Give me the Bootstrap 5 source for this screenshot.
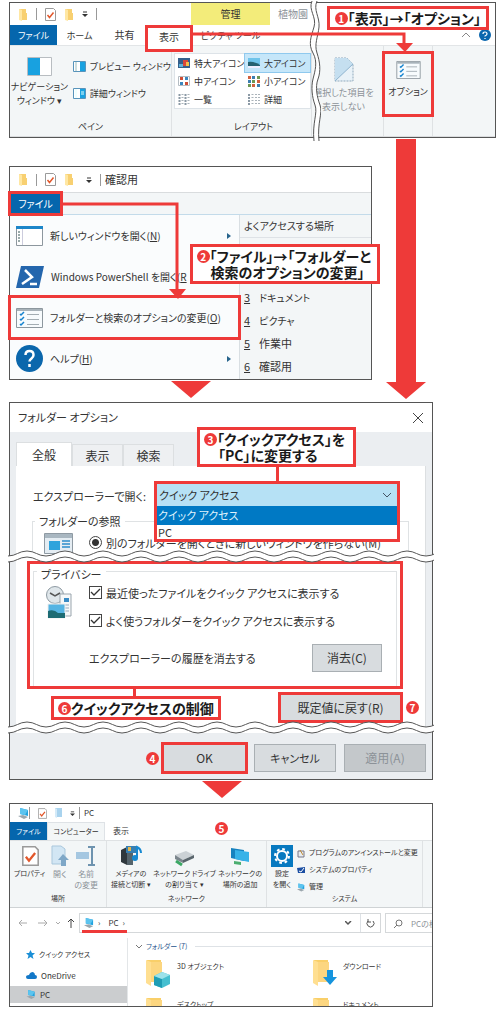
<!DOCTYPE html>
<html lang="ja">
<head>
<meta charset="utf-8">
<meta name="viewport" content="width=device-width, initial-scale=1">
<title>フォルダー オプション</title>
<link href="https://cdn.jsdelivr.net/npm/bootstrap@5.3.0/dist/css/bootstrap.min.css" rel="stylesheet">
<script src="https://cdn.jsdelivr.net/npm/bootstrap@5.3.0/dist/js/bootstrap.bundle.min.js"></script>
<style>
:root{--red:#ee3a39;--ribbon:#f3f6f7;--file:#0566ad;--ink:#333}
body{font-family:"Noto Sans CJK JP",sans-serif;font-feature-settings:"palt";color:var(--ink);background:#fff;line-height:1;font-size:10px}
main{padding:2px 4px 4px 9px}
svg{display:block;flex:none}
button,select,input{font:inherit;font-feature-settings:inherit;color:inherit}
button{border:0;background:none;padding:0;white-space:nowrap}
.pane{position:relative;border:1px solid #555;background:#fff;white-space:nowrap}
.pane-mid{width:calc(100% - 124px);margin-top:28px}
.pane-wide{width:calc(100% - 63px)}
.callout{position:absolute;z-index:5;border:3px solid var(--red);background:#fff;color:#1a1a1a;font-weight:700;font-size:14px;line-height:16px;white-space:nowrap}
.num{display:inline-flex;align-items:center;justify-content:center;width:13px;height:13px;border-radius:50%;background:var(--red);color:#fff;font-size:10px;font-weight:700;line-height:13px;vertical-align:1px;flex:none}
.boxed{outline:3px solid var(--red);outline-offset:-1px;position:relative;z-index:2}
.over{position:absolute;z-index:4;pointer-events:none}
.vr-line{width:1px;height:12px;background:#999}
.file-tab{background:var(--file);color:#fff}
.strip{background:var(--ribbon)}
.dim{color:#8c9298}
.t8{font-size:8px}
.t9{font-size:9px}
.t10{font-size:10px}
.t11{font-size:11px}
.t12{font-size:12px}
/* ribbon window */
.r-title{height:22px}
.r-tabs{height:20px}
.r-tabs .boxed{height:23px;margin-top:2px}
.ctx{background:#f3ec7a;width:79px}
.r-body{height:92px;border-top:1px solid #e2e5e7;border-bottom:1px solid #dadcde;font-size:9px}
.grp{display:flex;flex-direction:column;border-right:1px solid #dfe2e4;padding-top:7px;flex:none}
.grp-name{margin-top:auto;padding-bottom:5px;text-align:center}
.gallery{background:#fff;border:1px solid #dde3e8;display:grid;grid-template-columns:70px 1fr;grid-auto-rows:18px;margin-left:2px}
.gallery button{display:flex;align-items:center;gap:4px;padding-left:3px}
.gallery .on{background:#c5e6f9;outline:1px solid #8fc9ee}
/* file menu */
.m-title{height:25px}
.m-strip{height:23px;border-top:1px solid #d9dcde;border-bottom:1px solid #c3dbea}
.m-item{height:41px;display:flex;align-items:center;gap:7px;padding-left:6px;width:100%;text-align:left}
.m-left{width:229px;background:#fafcfd;flex:none}
.m-right{border-left:1px solid #d9dfe3;background:var(--ribbon)}
.m-right li{height:23px;display:flex;align-items:center;gap:9px;padding-left:4px}
/* dialog */
.dlg{font-size:11px;margin-top:22px}
.d-title{height:29px}
.d-back{background:#ebeef1;padding:10px 6px 0}
.d-tab{height:22px;width:51px;background:#eef0f2;border:1px solid #dcdfe1;border-bottom:0;margin-top:2px}
.d-tab.on{height:24px;width:56px;background:#fff;margin-top:0}
.d-page{background:#fff;border-right:1px solid #dcdfe1}
.open-row{position:relative;padding:22px 0 0 17px}
.combo{position:absolute;z-index:3;left:138px;right:25px;top:15px;border:3px solid var(--red);background:#fff}
.combo select{display:block;width:100%;height:22px;border:0;border-radius:0;background-color:#b6e1f5;padding:0 2px;appearance:none}
.combo li{height:19px;line-height:19px;padding-left:1px}
.combo li.sel{background:#0079c4;color:#dff1fc}
.combo li + li{height:14px;line-height:14px}
.frame{border:1px solid #dfe2e4}
.folder-set{margin:10px 16px 0}
.legend-text{background:#fff;padding:0 4px;line-height:14px;font-size:11px;float:none;width:auto;margin:-7px 0 0 2px}
.tear{position:relative;z-index:3;width:calc(100% + 4px);margin-left:-2px}
.form-check-input{width:13px;height:13px;margin:0;border:1px solid #444;background-size:13px;flex:none}
.form-check-input[type=checkbox]{border-radius:0}
.form-check-input:checked{background-color:#fff;border-color:#444}
.form-check-input:checked[type=checkbox]{background-image:url("data:image/svg+xml,%3csvg xmlns='http://www.w3.org/2000/svg' viewBox='0 0 13 13'%3e%3cpath d='M2 6l3 3 6-6' fill='none' stroke='%23333' stroke-width='1.3'/%3e%3c/svg%3e")}
.form-check-input:checked[type=radio]{background-image:radial-gradient(circle,#333 3px,#fff 4px)}
.btn-win{background:#d8dcdf;border:1px solid #a9afb3;height:28px}
/* explorer */
.exp{font-size:7px;margin-top:23px;overflow:hidden}
.e-title{height:18px}
.e-tabs{height:18px}
.e-body{height:68px;border-top:1px solid #dfe2e4;border-bottom:1px solid #cfd3d5}
.e-body .grp{padding-top:4px}
.e-btn{display:flex;flex-direction:column;align-items:center;line-height:11px}
.e-btn svg{margin-bottom:1px}
.addr{height:30px}
.addr-box{height:20px;border:1px solid #d5d8da}
.e-nav{width:118px;border-right:1px solid #e3e6e8;padding-top:6px;flex:none}
.e-nav a{display:flex;align-items:center;gap:4px;height:21px;padding-left:16px;color:inherit;text-decoration:none}
.e-nav a.on{background:#cbcdcf;height:17px}
.e-files{height:68px}
.tile{display:flex;gap:6px;height:38px}
.tile span{line-height:14px}
</style>
</head>
<body>
<svg width="0" height="0" class="position-absolute">
  <defs>
    <symbol id="folder" viewBox="0 0 10 13"><path d="M1 1h7v4h1v7H1z" fill="#f8d071"/><path d="M1 1l3 1v11l-3-1z" fill="#ffe7a3"/></symbol>
    <symbol id="doc" viewBox="0 0 11 13"><path d="M.5.5h8l2 2v10H.5z" fill="#fff" stroke="#9a9a9a"/><path d="M2.500 7l2 2.500 4-5" fill="none" stroke="#e2572b" stroke-width="1.500"/></symbol>
    <symbol id="drop" viewBox="0 0 6 6"><path d="M1 1h4" stroke="#333"/><path d="M0 3h6L3 6z" fill="#333"/></symbol>
    <symbol id="opt" viewBox="0 0 27 20"><path d="M.5.5h26v19H.5z" fill="#f7fbfd" stroke="#8d979e"/><path d="M1 1h25v2H1z" fill="#a8b3ba"/><path d="M4 6l1 1 3-3M4 11l1 1 3-3M4 16l1 1 3-3" fill="none" stroke="#1583cf" stroke-width="1.500"/><path d="M11 6.500h12M11 11.500h12M11 16.500h12" stroke="#a3adb3"/></symbol>
    <symbol id="pc" viewBox="0 0 11 11"><path d="M2 0l8 2v6L2 6z" fill="#22a3df"/><path d="M2 0l8 2-3 5-5-1z" fill="#5cc4ef"/><path d="M0 8l5-1 5 2-4 2z" fill="#9ba7ae"/></symbol>
    <symbol id="big-folder" viewBox="0 0 17 28"><path d="M1 1h14v21H1z" fill="#f9cf69"/><path d="M0 1l5 2v24l-5-3z" fill="#ffdf91"/><path d="M5 3h11v20H5z" fill="#fcd680"/></symbol>
    <pattern id="wave" width="38" height="14" patternUnits="userSpaceOnUse">
      <path d="M0 6C8 6 11 1 19 1S30 6 38 6V12C30 12 27 7 19 7S8 12 0 12z" fill="#fff"/>
      <path d="M0 6C8 6 11 1 19 1S30 6 38 6M0 12C8 12 11 7 19 7S30 12 38 12" fill="none" stroke="#555"/>
    </pattern>
  </defs>
</svg>
<main>

<section class="pane">
  <div class="r-title d-flex align-items-center">
    <div class="d-flex align-items-center ps-1" style="width:181px">
      <svg class="ms-1 me-1" width="10" height="13"><use href="#folder"/></svg>
      <span class="vr-line mx-1"></span>
      <svg class="ms-1 me-2" width="11" height="13"><use href="#doc"/></svg>
      <svg class="me-2" width="10" height="13"><use href="#folder"/></svg>
      <svg class="me-2" width="6" height="6"><use href="#drop"/></svg>
      <span class="vr-line"></span>
    </div>
    <div class="ctx h-100 d-flex align-items-center justify-content-center">管理</div>
    <span class="dim ms-2">植物園</span>
  </div>
  <div class="r-tabs d-flex align-items-stretch">
    <button class="file-tab t9" style="width:47px">ファイル</button>
    <button class="t9" style="width:45px">ホーム</button>
    <button style="width:45px">共有</button>
    <button class="boxed bg-white pb-1" style="width:44px">表示</button>
    <button class="t9" style="width:79px">ピクチャ ツール</button>
    <div class="ms-auto d-flex align-items-center gap-2 pe-1">
      <svg width="10" height="6"><path d="M1 5l4-4 4 4" fill="none" stroke="#888"/></svg>
      <svg width="12" height="12"><circle cx="6" cy="6" r="6" fill="#0a66ae"/><path d="M4 5q0-2 2-2t2 2q0 1-2 2v.500M6 9v1" fill="none" stroke="#fff" stroke-width="1.200"/></svg>
    </div>
  </div>
  <div class="r-body strip d-flex">
    <div class="grp" style="width:162px">
      <div class="d-flex">
        <button class="d-flex flex-column align-items-center pt-1" style="width:59px;line-height:14px">
          <svg class="mb-1" width="25" height="19"><path d="M.5.5h24v18H.5z" fill="#fff" stroke="#b8bdc1"/><path d="M1 1h12v17H1z" fill="#18a1e0"/></svg>
          <span>ナビゲーション</span><span>ウィンドウ ▾</span>
        </button>
        <div class="d-flex flex-column gap-3 pt-2 ps-1">
          <button class="d-flex align-items-center gap-1"><svg width="13" height="11"><path d="M.5.5h12v10H.5z" fill="#fff" stroke="#5894bb"/><path d="M7 1h5v9H7z" fill="#18a1e0"/><path d="M3 1v9" stroke="#9bb"/></svg>プレビュー ウィンドウ</button>
          <button class="d-flex align-items-center gap-1"><svg width="13" height="11"><path d="M.5.5h12v10H.5z" fill="#fff" stroke="#5894bb"/><path d="M7 1h5v9H7z" fill="#18a1e0"/><path d="M3 1v9M8 4h3M8 6h3" stroke="#dff"/></svg>詳細ウィンドウ</button>
        </div>
      </div>
      <div class="grp-name">ペイン</div>
    </div>
    <div class="grp" style="width:140px">
      <div class="gallery">
        <button><svg width="12" height="10"><path d="M0 0h12v10H0z" fill="#35608c"/><path d="M5 2h5v6H5z" fill="#d9483b"/><path d="M8 4h3v4H8z" fill="#f3c04b"/><path d="M1 6h4v3H1z" fill="#61b3d8"/></svg>特大アイコン</button>
        <button class="on"><svg width="12" height="10"><path d="M0 0h12v10H0z" fill="#6fc4ea"/><path d="M0 4q6-1 12 3v3H0z" fill="#256170"/><path d="M0 8h12v2H0z" fill="#eef"/></svg>大アイコン</button>
        <button><svg width="12" height="10"><path d="M.5.5h11v9H.5z" fill="#fff" stroke="#b5bdc3"/><path d="M2 1h3v3H2zM7 6h3v3H7z" fill="#cf4d35"/><path d="M7 1h3v3H7zM2 6h3v3H2z" fill="#3b86bd"/></svg>中アイコン</button>
        <button><svg width="12" height="11"><path d="M0 0h3v3H0zM9 4h3v3H9zM4 8h3v3H4z" fill="#d0603e"/><path d="M4 0h3v3H4zM0 4h3v3H0zM9 8h3v3H9z" fill="#3c7eb0"/><path d="M9 0h3v3H9zM4 4h3v3H4zM0 8h3v3H0z" fill="#6d9752"/></svg>小アイコン</button>
        <button><svg width="12" height="11"><path d="M1.500 0v11M7.500 0v11" stroke="#8b99a5" stroke-width="2" stroke-dasharray="2 1"/><path d="M4.500 0v11M10.500 0v11" stroke="#aab3ba" stroke-width="2" stroke-dasharray="1 2"/></svg>一覧</button>
        <button><svg width="12" height="11"><path d="M1 0v11" stroke="#8b99a5" stroke-width="2" stroke-dasharray="2 1"/><path d="M4.500 0v11M8 0v11M11 0v11" stroke="#aab3ba" stroke-width="2" stroke-dasharray="1 2"/></svg>詳細</button>
      </div>
      <div class="grp-name ps-4">レイアウト</div>
    </div>
    <div class="grp dim align-items-center pe-2" style="width:72px;line-height:14px">
      <svg class="mt-1 mb-1" width="20" height="25"><path d="M1 1h12l6 6v17H1z" fill="#e9f2f8" stroke="#8fa9bc" stroke-dasharray="2 1"/><path d="M1 24L19 7l-6-6H1z" fill="#c5dff0"/><path d="M1 24L19 7" stroke="#8fb4cf"/></svg>
      <span>選択した項目を</span><span>表示しない</span>
    </div>
    <div class="grp">
      <button class="boxed d-flex flex-column align-items-center pt-1" style="width:48px;height:62px"><svg class="mb-2 mt-1" width="25" height="18"><use href="#opt"/></svg>オプション</button>
    </div>
  </div>
  <svg class="over" style="left:299px;top:-2px" width="12" height="140"><path d="M3 0C-1 9 8 16 5 26S-1 43 4 52s2 18 0 26-1 18 2 26-3 18-1 36h5c-3-18 3-28 1-36s-5-18-2-26 2-18-1-26 2-16 2-26S5 9 8 0z" fill="#fff"/><path d="M3 0C-1 9 8 16 5 26S-1 43 4 52s2 18 0 26-1 18 2 26-3 18-1 36M8 0C4 9 11 16 10 26S5 43 8 52s4 18 1 26-1 18 2 26-3 18-1 36" fill="none" stroke="#555"/></svg>
  <svg class="over" style="left:181px;top:28px" width="224" height="24"><path d="M0 3h213v12" fill="none" stroke="#ee3a39" stroke-width="3"/><path d="M205 12h17l-8 9z" fill="#ee3a39"/></svg>
  <div class="callout" style="right:6px;top:3px;padding:1px 5px"><span class="num">1</span>「表示」→「オプション」</div>
  <svg class="over" style="right:69px;top:136px" width="40" height="261"><path d="M10 0h20v243h10L20 260 0 243h10z" fill="#ee3a39"/></svg>
</section>

<section class="pane pane-mid">
  <div class="m-title d-flex align-items-center ps-1">
    <svg class="ms-1 me-1" width="10" height="13"><use href="#folder"/></svg>
    <span class="vr-line mx-1"></span>
    <svg class="ms-1 me-2" width="11" height="13"><use href="#doc"/></svg>
    <svg class="me-2" width="10" height="13"><use href="#folder"/></svg>
    <svg class="ms-1 me-2" width="6" height="6"><use href="#drop"/></svg>
    <span class="vr-line me-1"></span><span class="t11">確認用</span>
  </div>
  <div class="m-strip strip d-flex"><button class="file-tab boxed" style="width:51px">ファイル</button></div>
  <div class="d-flex">
    <div class="m-left">
      <button class="m-item"><svg width="27" height="20"><path d="M.5.5h26v19H.5z" fill="#fff" stroke="#8d979e"/><path d="M0 0h27v3H0z" fill="#1c86c9"/><path d="M3 5v12" stroke="#9aa" stroke-width="2" stroke-dasharray="2 1"/><path d="M6.500 3v16" stroke="#ccd"/></svg>
        <span>新しいウィンドウを開く(<u>N</u>)</span><svg class="ms-auto me-2" width="4" height="6"><path d="M0 0l4 3-4 3z" fill="#27648c"/></svg></button>
      <button class="m-item"><svg width="28" height="22"><path d="M5 0h23l-5 22H0z" fill="#2466ad"/><path d="M9 4l7 7-10 7M14 18h7" fill="none" stroke="#fff" stroke-width="2.500"/></svg>
        <span>Windows PowerShell を開く(<u>R</u></span></button>
      <button class="m-item boxed"><svg width="27" height="20"><use href="#opt"/></svg><span>フォルダーと検索のオプションの変更(<u>O</u>)</span></button>
      <button class="m-item"><svg width="27" height="27"><circle cx="13.500" cy="13.500" r="13.500" fill="#0b67ac"/><path d="M9.500 10q0-4 4-4t4 4q0 2-2 3.500t-2 3M13.500 19v3" fill="none" stroke="#fff" stroke-width="2.500"/></svg>
        <span>ヘルプ(<u>H</u>)</span><svg class="ms-auto me-2" width="4" height="6"><path d="M0 0l4 3-4 3z" fill="#27648c"/></svg></button>
    </div>
    <div class="m-right flex-fill">
      <div class="ps-1 border-bottom" style="line-height:22px">よくアクセスする場所</div>
      <ul class="list-unstyled mb-0 mt-5 t11">
        <li><u>3</u><span class="t10">ドキュメント</span></li><li><u>4</u><span class="t10">ピクチャ</span></li><li><u>5</u>作業中</li><li><u>6</u>確認用</li>
      </ul>
    </div>
  </div>
  <svg class="over" style="left:53px;top:34px" width="130" height="100"><path d="M0 3h114v87" fill="none" stroke="#ee3a39" stroke-width="3"/><path d="M106 88h17l-8 10z" fill="#ee3a39"/></svg>
  <div class="callout" style="right:-9px;top:77px;padding:1px 6px 1px 4px"><span class="num">2</span>「ファイル」→「フォルダーと<br><span style="padding-left:14px">検索のオプションの変更」</span></div>
  <svg class="over" style="left:161px;top:214px" width="40" height="17"><path d="M0 0h40L20 17z" fill="#ee3a39"/></svg>
</section>

<section class="pane pane-wide dlg">
  <div class="d-title d-flex align-items-center justify-content-between ps-2 pe-2"><span>フォルダー オプション</span>
    <button aria-label="閉じる"><svg width="12" height="12"><path d="M1 1l10 10M11 1L1 11" stroke="#444"/></svg></button></div>
  <div class="d-back">
    <div class="d-flex t12"><button class="d-tab on">全般</button><button class="d-tab">表示</button><button class="d-tab">検索</button></div>
    <div class="d-page">
      <div class="open-row">
        <label for="openIn" class="d-block" style="line-height:16px">エクスプローラーで開く:</label>
        <div class="combo">
          <select id="openIn"><option>クイック アクセス</option></select>
          <ul class="list-unstyled mb-0"><li class="sel">クイック アクセス</li><li>PC</li></ul>
          <svg class="over" style="right:6px;top:9px" width="8" height="5"><path d="M0 0l4 4 4-4" fill="none" stroke="#456"/></svg>
        </div>
      </div>
      <fieldset class="frame border-bottom-0 folder-set">
        <legend class="legend-text">フォルダーの参照</legend>
        <div class="d-flex" style="height:29px;padding-left:11px">
          <svg class="me-3 mt-1" width="29" height="22"><path d="M.5 1.500h28v20H.5z" fill="#e5edf3" stroke="#8f9aa3"/><path d="M1 2h27v4H1z" fill="#a9b7c1"/><path d="M5 9h11v9H5z" fill="#2ea3dc"/><path d="M18 9h8M18 12h8M18 15h8" stroke="#5aa5d5" stroke-width="2"/></svg>
          <div class="d-flex gap-1 align-items-start pt-2"><input class="form-check-input" type="radio" id="same" checked><label for="same" style="line-height:14px">別のフォルダーを開くときに新しいウィンドウを作らない(M)</label></div>
        </div>
      </fieldset>
    </div>
  </div>
  <svg class="tear" width="100%" height="14" style="margin-top:-7px;margin-bottom:-7px"><rect width="100%" height="14" fill="url(#wave)"/></svg>
  <div class="d-back pt-0">
    <div class="d-page" style="padding:6px 24px 12px 13px">
      <fieldset class="boxed px-1" style="padding-top:8px;height:124px">
        <legend class="legend-text position-absolute ms-1 mt-0" style="top:4px">プライバシー</legend>
        <div class="frame d-flex h-100 mb-1" style="padding:14px 0 0 11px">
          <svg class="me-3" width="28" height="34"><circle cx="10" cy="9" r="8.500" fill="#dfe6ea" stroke="#8e9aa2"/><path d="M5 7l5 3 5-3" fill="none" stroke="#555" stroke-width="1.500"/><path d="M15 8h11v22H15z" fill="#f6f8f9" stroke="#9aa5ad"/><path d="M19 12h5v4h-5z" fill="#3a8bc4"/><path d="M18 19h6M18 22h6M18 25h6" stroke="#9ab"/><path d="M3 18h17v14H3z" fill="#55b4e3" stroke="#eee"/><path d="M3 25q6-2 10 2h7v5H3z" fill="#1d6b73"/></svg>
          <div class="flex-fill">
            <div class="d-flex gap-1"><input class="form-check-input" type="checkbox" id="rf" checked><label for="rf" style="line-height:14px">最近使ったファイルをクイック アクセスに表示する</label></div>
            <div class="d-flex gap-1" style="margin-top:14px"><input class="form-check-input" type="checkbox" id="ff" checked><label for="ff" style="line-height:14px">よく使うフォルダーをクイック アクセスに表示する</label></div>
            <div class="d-flex align-items-center mt-3 justify-content-between" style="padding-right:14px"><span>エクスプローラーの履歴を消去する</span><button class="btn-win t12" style="width:70px">消去(C)</button></div>
          </div>
        </div>
      </fieldset>
      <div class="d-flex justify-content-end position-relative" style="padding-top:7px">
        <svg class="over" style="left:104px;top:0" width="3" height="11"><path d="M0 0h3v11H0z" fill="#ee3a39"/></svg>
        <div class="callout" style="left:22px;top:9px;padding:1px 4px"><span class="num">6</span>クイックアクセスの制御</div>
        <button class="btn-win boxed border-0 t12" style="width:121px;height:27px">既定値に戻す(R)</button>
        <span class="num over" style="right:-18px;top:14px">7</span>
      </div>
    </div>
  </div>
  <svg class="tear" width="100%" height="14" style="margin-top:-12px"><rect width="100%" height="14" fill="url(#wave)"/></svg>
  <div class="d-back d-flex justify-content-end align-items-center gap-2 t12" style="padding-top:11px;padding-bottom:7px;margin-top:-2px">
    <span class="num">4</span><button class="btn-win boxed border-0" style="width:83px;margin-left:-4px">OK</button><button class="btn-win t11" style="width:82px">キャンセル</button><button class="btn-win dim" style="width:82px;background:#c4c8cb" disabled>適用(A)</button>
  </div>
  <svg class="over" style="left:266px;top:64px" width="3" height="15"><path d="M0 0h3v15H0z" fill="#ee3a39"/></svg>
  <div class="callout" style="left:187px;top:24px;padding:1px 8px 1px 4px"><span class="num">3</span>「クイックアクセス」を<br><span style="padding-left:14px">「PC」に変更する</span></div>
  <svg class="over" style="left:192px;bottom:-19px" width="40" height="17"><path d="M0 0h40L20 17z" fill="#ee3a39"/></svg>
</section>

<section class="pane pane-wide exp">
  <div class="e-title d-flex align-items-center ps-1">
    <svg class="ms-1" width="11" height="11"><use href="#pc"/></svg><span class="vr-line"></span>
    <svg class="ms-2 me-2" width="9" height="11"><use href="#doc"/></svg>
    <svg width="7" height="10"><path d="M0 0h7v9H0z" fill="#a9d3ee"/><path d="M0 0l2 1v9L0 9z" fill="#d4eaf8"/></svg>
    <svg class="ms-2" width="5" height="5"><use href="#drop"/></svg><span class="vr-line ms-1 me-1"></span><span class="t8">PC</span>
  </div>
  <div class="e-tabs d-flex">
    <button class="file-tab" style="width:37px">ファイル</button><button class="strip border border-bottom-0" style="width:58px">コンピューター</button><button class="px-2 t8">表示</button>
    <span class="num over" style="left:205px;top:18px">5</span>
  </div>
  <div class="e-body strip d-flex">
    <div class="grp" style="width:97px">
      <div class="d-flex justify-content-between ps-1 pe-2">
        <button class="e-btn"><svg width="20" height="22"><use href="#doc" x="2" y="1" width="17" height="20"/></svg>プロパティ</button>
        <button class="e-btn dim t8"><svg width="20" height="22"><path d="M2 1h9l4 3v15H2z" fill="#d2e6f4" stroke="#a9c7dc"/><path d="M13 9l6 6h-3v6h-5v-6H8z" fill="#7ea7c7"/></svg>開く</button>
        <button class="e-btn dim t8"><svg width="20" height="22"><path d="M0 7h13v7H0z" fill="#a5c7e1"/><path d="M12 2h7M12 20h7M16 2v18" stroke="#6e93af" stroke-width="2"/></svg>名前<span>の変更</span></button>
      </div>
      <div class="grp-name">場所</div>
    </div>
    <div class="grp" style="width:160px">
      <div class="d-flex justify-content-between ps-1 pe-1">
        <button class="e-btn"><svg width="22" height="22"><path d="M1 5l6-3v18l-6-3z" fill="#2f383d"/><path d="M7 2h6v18H7z" fill="#55646c"/><path d="M6 1h11v7H6z" fill="#377fb2"/><path d="M8 2h3v4H8z" fill="#e4b64c"/><path d="M17 13V2q4 2 4 6" fill="none" stroke="#1689d1" stroke-width="2"/><circle cx="15" cy="13" r="3" fill="#1689d1"/></svg>メディアの<span>接続と切断 ▾</span></button>
        <button class="e-btn"><svg width="22" height="22"><path d="M2 10l11-4 8 4-11 5z" fill="#cbd1d5"/><path d="M2 10l8 5v3l-8-4z" fill="#7b868d"/><path d="M10 15l11-5v3l-11 5z" fill="#59656c"/><path d="M3 16l6 4" stroke="#3ba865" stroke-width="3"/></svg>ネットワーク ドライブ<span>の割り当て ▾</span></button>
        <button class="e-btn"><svg width="22" height="22"><path d="M2 3l13 2v11L2 13z" fill="#1682bf"/><path d="M6 5l14 2v10L6 14z" fill="#36b2e8"/><path d="M5 16l7 1v3l-7-1z" fill="#4bae70"/></svg>ネットワークの<span>場所の追加</span></button>
      </div>
      <div class="grp-name">ネットワーク</div>
    </div>
    <div class="grp" style="width:156px">
      <div class="d-flex ps-1 gap-1">
        <button class="e-btn"><svg width="22" height="22"><path d="M0 0h22v22H0z" fill="#0779c0"/><circle cx="11" cy="11" r="5" fill="none" stroke="#fff" stroke-width="2"/><circle cx="11" cy="11" r="7" fill="none" stroke="#fff" stroke-width="2" stroke-dasharray="2.750 2.750"/></svg>設定<span>を開く</span></button>
        <div class="d-flex flex-column gap-2 pt-1">
          <button class="d-flex gap-1"><svg width="8" height="9"><path d="M1 2h6v6H1z" fill="#e8ecef" stroke="#778"/><path d="M3 1l3 5" stroke="#c08b35"/></svg>プログラムのアンインストールと変更</button>
          <button class="d-flex gap-1"><svg width="8" height="9"><path d="M0 2l8-1v6H1z" fill="#1c4fa3"/><path d="M2 5l2 1 3-4" fill="none" stroke="#fff"/></svg>システムのプロパティ</button>
          <button class="d-flex gap-1"><svg width="8" height="9"><use href="#pc"/></svg>管理</button>
        </div>
      </div>
      <div class="grp-name">システム</div>
    </div>
  </div>
  <div class="addr d-flex align-items-center t8">
    <svg width="69" height="20"><g fill="none" stroke="#aaa"><path d="M9 10h8M12 7l-3 3 3 3M28 10h9M34 7l3 3-3 3M46 9l2 2 2-2"/><path d="M61 15V6M58 9l3-3 3 3" stroke="#444"/></g></svg>
    <div class="addr-box d-flex align-items-center flex-fill ps-1 position-relative">
      <svg width="10" height="10"><use href="#pc"/></svg><span class="px-1">›</span><span class="px-1">PC</span><span>›</span>
      <svg class="ms-auto me-2" width="7" height="5"><path d="M0 0l3 3 3-3" fill="none" stroke="#555" stroke-width="1.500"/></svg>
      <button class="h-100 border-start" style="width:20px" aria-label="更新"><svg class="mx-auto" width="9" height="9"><path d="M2 2a3.500 3.500 0 1 0 5 0M2 0v3h3" fill="none" stroke="#555"/></svg></button>
      <svg class="over" style="left:2px;bottom:-1px" width="45" height="3"><path d="M0 0h45v3H0z" fill="#ee3a39"/></svg>
    </div>
    <div class="addr-box d-flex align-items-center border-end-0 ps-2 gap-2 ms-1" style="width:47px">
      <svg width="9" height="9"><circle cx="5" cy="4" r="3" fill="none" stroke="#777"/><path d="M3 6L0 9" stroke="#777"/></svg>
      <input class="border-0 p-0 w-100 bg-transparent dim" aria-label="検索" value="PCの検">
    </div>
  </div>
  <div class="d-flex e-files">
    <nav class="e-nav">
      <a href="#"><svg width="9" height="9"><path d="M4.500 0l1.500 3h3L6.500 5.500l1 3.500-3-2-3 2 1-3.500L0 3h3z" fill="#1b8fd6"/></svg>クイック アクセス</a>
      <a href="#" class="t8"><svg width="11" height="7"><path d="M2 7q-2 0-2-2t3-2q1-3 4-3 2 1 2 3 2 0 2 2t-2 2z" fill="#1278c8"/></svg>OneDrive</a>
      <a href="#" class="on t8 ps-3"><svg width="10" height="9"><use href="#pc"/></svg>PC</a>
    </nav>
    <div class="flex-fill ps-2">
      <div class="d-flex align-items-center gap-1" style="color:#26538c;height:17px"><svg width="6" height="4"><path d="M0 0l3 3 3-3" fill="none" stroke="#777"/></svg>フォルダー (7)<span class="flex-fill border-top ms-1"></span></div>
      <div class="row g-0 pt-1" style="padding-left:10px">
        <div class="col-7 tile"><svg width="25" height="29"><use href="#big-folder" width="17" height="28"/><path d="M8 17l8-4 8 3v9l-8 4-8-3z" fill="#45bfd0"/><path d="M8 17l8 3v9l-8-3z" fill="#1f9db5"/><path d="M8 17l8-4 8 3-8 4z" fill="#9ce2ea"/></svg><span>3D オブジェクト</span></div>
        <div class="col-5 tile"><svg width="24" height="29"><use href="#big-folder" width="17" height="28"/><path d="M14 11h6v7h4l-7 8-7-8h4z" fill="#1594dd"/></svg><span>ダウンロード</span></div>
        <div class="col-7 tile"><svg width="25" height="28"><use href="#big-folder" width="17" height="28"/></svg><span>デスクトップ</span></div>
        <div class="col-5 tile"><svg width="24" height="28"><use href="#big-folder" width="17" height="28"/></svg><span>ドキュメント</span></div>
      </div>
    </div>
  </div>
</section>
</main>
</body>
</html>
